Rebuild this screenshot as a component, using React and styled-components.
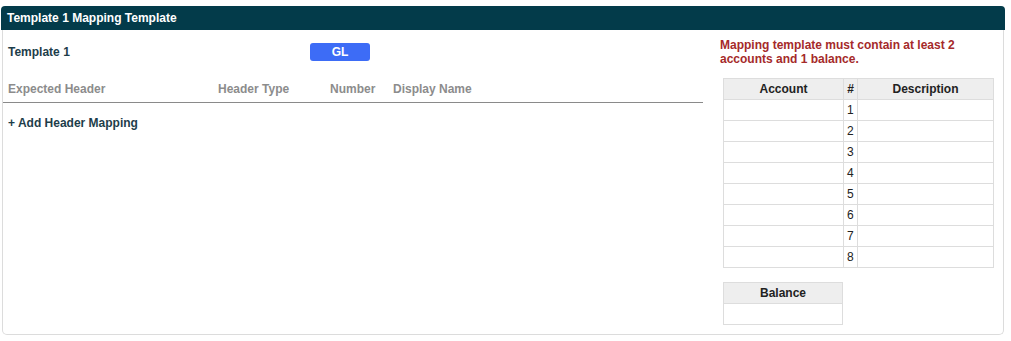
import React from 'react';
import styled, { createGlobalStyle } from 'styled-components';

const GlobalStyle = createGlobalStyle`
    body {
        margin: 0;
        background: #fff;
        font-family: 'Liberation Sans', Arial, sans-serif;
        font-size: 12px;
    }
`;

const Page = styled.div`
    padding: 6px 7px 0 2px;
`;

const Panel = styled.div`
    width: 1000px;
    height: 304px;
    border: 1px solid #dcdcdc;
    border-top: none;
    border-radius: 0 0 5px 5px;
`;

const PanelHeader = styled.div`
    height: 24px;
    margin: 0 -1px;
    padding: 0 6px;
    display: flex;
    align-items: center;
    background: #033b4a;
    color: #fff;
    font-weight: bold;
    font-size: 12px;
    border-radius: 4px 4px 0 0;
`;

const Body = styled.div`
    display: flex;
`;

const LeftCol = styled.div`
    width: 700px;
`;

const TemplateRow = styled.div`
    display: flex;
    align-items: center;
    margin-top: 13px;
    padding-left: 5px;
    height: 18px;
`;

const Label = styled.div`
    width: 302px;
    color: #1d3d4a;
    font-weight: bold;
`;

const TypeButton = styled.div`
    width: 60px;
    height: 18px;
    border-radius: 3px;
    background: #3d6cf6;
    color: #fff;
    font-weight: bold;
    display: flex;
    align-items: center;
    justify-content: center;
`;

const HeadRow = styled.div`
    display: flex;
    align-items: center;
    margin-top: 15px;
    height: 26px;
    padding-left: 5px;
    border-bottom: 1px solid #8a8a8a;
`;

const HeadCell = styled.div`
    width: ${p => p.w}px;
    color: #8c8c8c;
    font-weight: bold;
`;

const AddLink = styled.div`
    margin-top: 12px;
    padding-left: 5px;
    line-height: 16px;
    color: #1d3d4a;
    font-weight: bold;
`;

const RightCol = styled.div`
    padding: 8px 0 0 17px;
`;

const Warning = styled.div`
    width: 260px;
    color: #a52a2a;
    font-weight: bold;
    line-height: 14px;
`;

const Table = styled.table`
    border-collapse: collapse;
    table-layout: fixed;
    width: ${p => p.w}px;
    margin: ${p => p.top}px 0 0 3px;
    font-size: 12px;
    color: #222;

    th, td {
        border: 1px solid #dddddd;
        height: 20px;
        padding: 0 3px;
    }

    th {
        background: #eeeeee;
        font-weight: bold;
        text-align: center;
    }
`;

const rows = [1, 2, 3, 4, 5, 6, 7, 8];

export default function App() {
    return (
        <>
            <GlobalStyle />
            <Page>
                <PanelHeader>Template 1 Mapping Template</PanelHeader>
                <Panel>
                    <Body>
                        <LeftCol>
                            <TemplateRow>
                                <Label>Template 1</Label>
                                <TypeButton>GL</TypeButton>
                            </TemplateRow>
                            <HeadRow>
                                <HeadCell w={210}>Expected Header</HeadCell>
                                <HeadCell w={112}>Header Type</HeadCell>
                                <HeadCell w={63}>Number</HeadCell>
                                <HeadCell w={120}>Display Name</HeadCell>
                            </HeadRow>
                            <AddLink>+ Add Header Mapping</AddLink>
                        </LeftCol>
                        <RightCol>
                            <Warning>Mapping template must contain at least 2 accounts and 1 balance.</Warning>
                            <Table top={12} w={270}>
                                <colgroup>
                                    <col style={{ width: 120 }} />
                                    <col style={{ width: 14 }} />
                                    <col style={{ width: 136 }} />
                                </colgroup>
                                <thead>
                                    <tr>
                                        <th>Account</th>
                                        <th>#</th>
                                        <th>Description</th>
                                    </tr>
                                </thead>
                                <tbody>
                                    {rows.map(n => (
                                        <tr key={n}>
                                            <td></td>
                                            <td>{n}</td>
                                            <td></td>
                                        </tr>
                                    ))}
                                </tbody>
                            </Table>
                            <Table top={14} w={120}>
                                <thead>
                                    <tr>
                                        <th>Balance</th>
                                    </tr>
                                </thead>
                                <tbody>
                                    <tr>
                                        <td></td>
                                    </tr>
                                </tbody>
                            </Table>
                        </RightCol>
                    </Body>
                </Panel>
            </Page>
        </>
    );
}
